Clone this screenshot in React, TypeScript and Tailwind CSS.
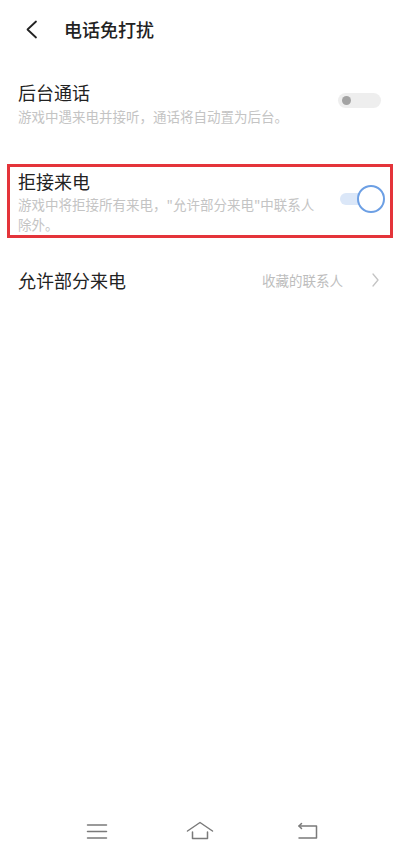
const font = { fontFamily: '"Noto Sans CJK SC", "Noto Sans", sans-serif' }

function Switch({ on }: { on: boolean }) {
  if (!on) {
    return (
      <div className="w-[43px] h-[15px] rounded-full bg-[#eeeeee] flex items-center pl-[4px]">
        <div className="w-[9px] h-[9px] rounded-full bg-[#a3a3a3]" />
      </div>
    )
  }
  return (
    <div className="relative w-[45px] h-[28px] flex items-center">
      <div className="w-[30px] h-[12px] rounded-full bg-[#dbe7f8]" />
      <div className="absolute right-0 top-0 w-[28px] h-[28px] rounded-full bg-white border-[2.5px] border-[#6c9fe4]" />
    </div>
  )
}

export default function App() {
  return (
    <div className="min-h-[850px] bg-white flex flex-col text-[#222]" style={font}>
      {/* Header */}
      <div className="h-[58px] flex items-center pl-[25px]">
        <svg width="13" height="19" viewBox="0 0 13 19" fill="none" stroke="#222" strokeWidth={1.8} strokeLinecap="round" strokeLinejoin="round">
          <path d="M11 1.5 L2.5 9.5 L11 17.5" />
        </svg>
        <span className="ml-[26px] text-[18px] font-medium leading-[24px]">电话免打扰</span>
      </div>

      {/* 后台通话 */}
      <div className="mt-[22px] px-[18px] flex justify-between">
        <div>
          <div className="text-[18px] leading-[24px]">后台通话</div>
          <div className="mt-[3px] text-[13.5px] leading-[18px] text-[#c4c4c4]">游戏中遇来电并接听，通话将自动置为后台。</div>
        </div>
        <div className="mt-[13px] mr-[1px]">
          <Switch on={false} />
        </div>
      </div>

      {/* 拒接来电 */}
      <div className="mt-[39px] mx-[7px] h-[74px] border-[3px] border-[#e4343a] flex justify-between pl-[8px] pr-[5px]">
        <div className="pt-[2px] w-[310px]">
          <div className="text-[18px] leading-[24px]">拒接来电</div>
          <div className="mt-[1px] text-[13.5px] leading-[20px] text-[#c4c4c4]">
            <div>游戏中将拒接所有来电，"允许部分来电"中联系人</div>
            <div>除外。</div>
          </div>
        </div>
        <div className="mt-[18px]">
          <Switch on={true} />
        </div>
      </div>

      {/* 允许部分来电 */}
      <div className="mt-[17px] h-[50px] px-[18px] flex items-center justify-between">
        <span className="text-[18px] leading-[24px]">允许部分来电</span>
        <div className="flex items-center">
          <span className="text-[13.5px] text-[#bdbdbd]">收藏的联系人</span>
          <svg className="ml-[29px] mr-[3px]" width="7" height="14" viewBox="0 0 7 14" fill="none" stroke="#c4c4c4" strokeWidth={1.3} strokeLinecap="round" strokeLinejoin="round">
            <path d="M1 1 L6 7 L1 13" />
          </svg>
        </div>
      </div>

      {/* Nav bar */}
      <div className="mt-auto h-[36px] flex items-start pt-[8px]">
        <div className="w-full relative h-[20px]">
          <svg className="absolute left-[86px] top-0" width="22" height="20" viewBox="0 0 22 20" fill="none" stroke="#7a7a7a" strokeWidth={1.5} strokeLinecap="round">
            <path d="M1.5 3 H20.5 M1.5 9.5 H20.5 M1.5 16 H20.5" />
          </svg>
          <svg className="absolute left-[186px] top-[-1px]" width="28" height="20" viewBox="0 0 28 20" fill="none" stroke="#7a7a7a" strokeWidth={1.5} strokeLinecap="round" strokeLinejoin="round">
            <path d="M1.5 10 L14 1.5 L26.5 10" />
            <path d="M6.5 11 V17.5 H21.5 V11" />
          </svg>
          <svg className="absolute left-[297px] top-0" width="22" height="20" viewBox="0 0 22 20" fill="none" stroke="#7a7a7a" strokeWidth={1.5} strokeLinecap="round" strokeLinejoin="round">
            <path d="M2 4 H19.5 V16 H2" />
            <path d="M4.5 1.5 L2 4 L4.5 6.5" />
          </svg>
        </div>
      </div>
    </div>
  )
}
